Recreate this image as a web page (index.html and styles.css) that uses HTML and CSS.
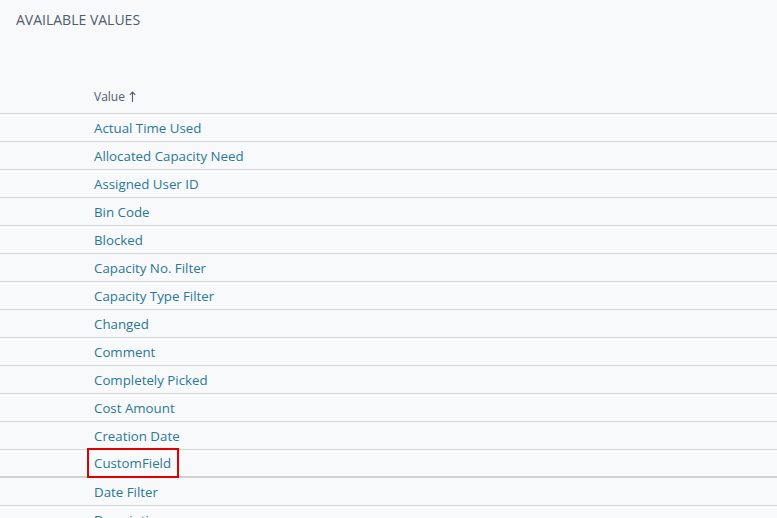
FILE: index.html
```html
<!DOCTYPE html>
<html lang="en">
<head>
    <meta charset="UTF-8">
    <meta name="viewport" content="width=device-width, initial-scale=1.0">
    <title>Available Values</title>
    <link rel="stylesheet" href="styles.css">
</head>
<body>
    <div class="page">
        <h2 class="title">Available Values</h2>

        <div class="list">
            <div class="list-head">
                <span class="cell">Value
                    <svg class="sort" width="7" height="11" viewBox="0 0 7 11">
                        <path d="M3.5 11V1M0.8 3.8L3.5 1L6.2 3.8" fill="none" stroke="#505c6d" stroke-width="1.1"/>
                    </svg>
                </span>
            </div>
            <div class="row"><span class="cell">Actual Time Used</span></div>
            <div class="row"><span class="cell">Allocated Capacity Need</span></div>
            <div class="row"><span class="cell">Assigned User ID</span></div>
            <div class="row"><span class="cell">Bin Code</span></div>
            <div class="row"><span class="cell">Blocked</span></div>
            <div class="row"><span class="cell">Capacity No. Filter</span></div>
            <div class="row"><span class="cell">Capacity Type Filter</span></div>
            <div class="row"><span class="cell">Changed</span></div>
            <div class="row"><span class="cell">Comment</span></div>
            <div class="row"><span class="cell">Completely Picked</span></div>
            <div class="row"><span class="cell">Cost Amount</span></div>
            <div class="row"><span class="cell">Creation Date</span></div>
            <div class="row selected"><span class="cell marked">CustomField</span></div>
            <div class="row"><span class="cell">Date Filter</span></div>
            <div class="row"><span class="cell">Description</span></div>
        </div>
    </div>
</body>
</html>
```

FILE: styles.css
```css
body {
    margin: 0;
    font-family: "Open Sans", "Noto Sans", Arial, sans-serif;
    background-color: #f8f9fa;
    overflow: hidden;
}

.page {
    height: 518px;
}

.title {
    margin: 0;
    padding: 12px 16px 0;
    height: 28px;
    font-size: 14px;
    font-weight: normal;
    line-height: 16px;
    text-transform: uppercase;
    color: #505c6d;
}

.list {
    margin-top: 45px;
}

.list-head {
    display: flex;
    align-items: flex-end;
    height: 28px;
    border-bottom: 1px solid #d6d6d6;
}

.list-head .cell {
    font-size: 12px;
    line-height: 16px;
    padding-bottom: 8px;
    color: #505c6d;
}

.sort {
    margin-left: 1px;
    vertical-align: -1px;
}

.row {
    display: flex;
    align-items: center;
    height: 27px;
    border-bottom: 1px solid #d6d6d6;
}

.cell {
    padding-left: 94px;
    font-size: 13.3px;
    line-height: 18px;
    color: #2a7895;
}

.row.selected {
    height: 26px;
    border-bottom: 2px solid #d0d0d0;
}

.marked {
    position: relative;
}

.marked::after {
    content: "";
    position: absolute;
    left: 87px;
    right: -8px;
    top: -6px;
    bottom: -6px;
    border: 2px solid #e00000;
}
```
